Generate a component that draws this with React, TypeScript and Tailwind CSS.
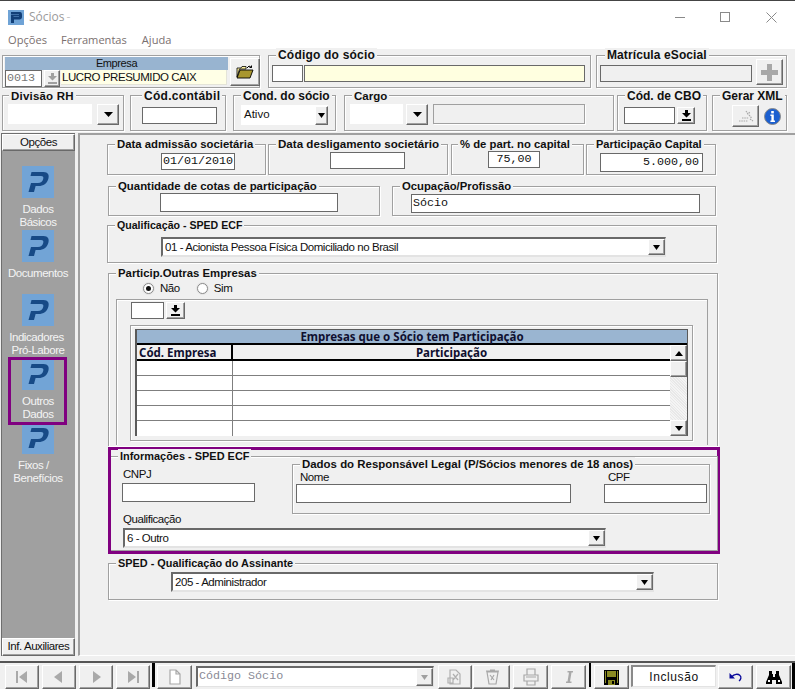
import React from "react";

const raised = "bg-[#f0f0f0] border border-t-white border-l-white border-r-[#696969] border-b-[#696969] shadow-[inset_-1px_-1px_0_#a0a0a0] flex items-center justify-center shrink-0";
const sans = "font-['Liberation_Sans',Arial,sans-serif]";
const mono = "font-['Liberation_Mono','Courier_New',monospace]";
const body = "text-[11.5px] tracking-[-0.44px]";

function Box({ cls, legend, lx, children, ls = "text-[11.4px]", lt = "-top-[8px]" }: { cls: string; legend?: string; lx?: string; children?: React.ReactNode; ls?: string; lt?: string }) {
  return (
    <div className={`relative border border-[#a0a0a0] shadow-[inset_1px_1px_0_#fff,1px_1px_0_#fff] shrink-0 ${cls}`}>
      {legend && (
        <span className={`absolute bg-[#f0f0f0] px-[2px] font-bold leading-[14px] whitespace-nowrap text-[#101010] ${lt} ${lx} ${ls}`}>
          {legend}
        </span>
      )}
      {children}
    </div>
  );
}

function Input({ cls, children }: { cls: string; children?: React.ReactNode }) {
  return <div className={`bg-white border border-[#696969] shrink-0 flex items-center overflow-hidden ${cls}`}>{children}</div>;
}

function Arrow({ w = 9, gray = false }: { w?: number; gray?: boolean }) {
  return (
    <svg width={w} height={5} viewBox="0 0 9 5" preserveAspectRatio="none">
      <path d="M0 0H9L4.5 5Z" fill={gray ? "#a0a0a0" : "#000"} />
    </svg>
  );
}

function DownBar({ gray = false }: { gray?: boolean }) {
  const c = gray ? "#a0a0a0" : "#000";
  return (
    <svg width="9" height="11" viewBox="0 0 9 11">
      <path d="M3 0H6V3H9L4.5 7.5L0 3H3Z" fill={c} />
      <rect x="0" y="9" width="9" height="2" fill={c} />
    </svg>
  );
}

function Combo({ cls, text }: { cls: string; text: string }) {
  return (
    <div className={`bg-white border-t-2 border-l-2 border-t-[#696969] border-l-[#696969] border-r border-b-2 border-r-[#e3e3e3] border-b-[#e3e3e3] flex items-center justify-between shrink-0 ${cls}`}>
      <span className={`pl-[2px] leading-[14px] whitespace-nowrap text-[#111] ${body}`}>{text}</span>
      <div className={`${raised} w-[17px] h-[16px]`}><Arrow w={7} /></div>
    </div>
  );
}

function PLogo({ size = 32 }: { size?: number }) {
  return (
    <svg width={size} height={size} viewBox="0 0 32 32" className="shrink-0">
      <rect width="32" height="32" fill="#72a4d6" />
      <path d="M9.5 6H21.5C26 6 27.5 9 26.3 13C25 17.5 21.5 20 16.5 20H13.6L12 26H6.5L9 17H16C18.8 17 20.5 15.5 21.2 13C21.8 11 21 10 19 10H8.5Z" fill="#174a86" />
    </svg>
  );
}

function SideItem({ label, label2, pad = "", pad2 = "", mark = false }: { label: string; label2?: string; pad?: string; pad2?: string; mark?: boolean }) {
  return (
    <div className="relative h-[64px] flex flex-col items-center pr-[1px]">
      {mark && <div className="absolute -top-[1px] left-[6px] w-[59px] h-[68px] border-[3px] border-[#800080] z-10" />}
      <PLogo />
      <div className={`mt-[5px] leading-[13px] text-[#f4f4f4] text-center whitespace-nowrap ${body}`}>
        <div className={pad}>{label}</div>
        {label2 && <div className={pad2}>{label2}</div>}
      </div>
    </div>
  );
}

function Radio({ on }: { on?: boolean }) {
  return (
    <span className="w-[11px] h-[11px] rounded-full bg-white border border-[#8a8a8a] shadow-[0_0_0_1px_#e4e4e4] flex items-center justify-center shrink-0">
      {on && <span className="w-[5px] h-[5px] rounded-full bg-[#111]" />}
    </span>
  );
}

function Ico({ d, w = 20, h = 20, fill = "#a9a9a9", stroke = "none" }: { d: string; w?: number; h?: number; fill?: string; stroke?: string }) {
  return (
    <svg width={w} height={h} viewBox="0 0 20 20">
      <path d={d} fill={fill} stroke={stroke} strokeWidth={stroke === "none" ? 0 : 1.2} />
    </svg>
  );
}

function Tool({ cls, children }: { cls: string; children?: React.ReactNode }) {
  return <div className={`${raised} h-[24px] ${cls}`}>{children}</div>;
}

export default function App() {
  return (
    <div className={`w-[795px] h-[689px] overflow-hidden flex flex-col bg-[#f0f0f0] text-black ${sans}`}>
      {/* Title */}
      <div className="h-[49px] bg-white border-t border-t-[#444] shrink-0 font-['Open_Sans',sans-serif]">
        <div className="h-[31px] flex items-center pl-[8px] pt-[1px]">
          <svg width="16" height="15" viewBox="0 0 16 15">
            <rect width="16" height="15" fill="#6fa3d6" />
            <path d="M3 2H12C13.5 2 14 3 14 5V7C14 8.5 13 9.5 11.5 9.5H6V13H3V5H11V6.5H5.5V7H11V4.5H3Z" fill="#123f78" />
          </svg>
          <span className="ml-[5px] text-[12px] text-[#9a9a9a]">Sócios</span>
          <span className="ml-[2px] text-[12px] text-[#c8c8c8]">-</span>
          <div className="ml-auto flex items-center">
            <div className="w-[10px] h-px bg-[#8a8a8a] mr-[35px]" />
            <div className="w-[10px] h-[10px] border border-[#8a8a8a] mr-[36px]" />
            <svg width="11" height="11" viewBox="0 0 11 11" className="mr-[18px]">
              <path d="M0.5 0.5L10.5 10.5M10.5 0.5L0.5 10.5" stroke="#8a8a8a" strokeWidth="1" />
            </svg>
          </div>
        </div>
        <div className="flex items-center h-[17px] pl-[8px] text-[11.1px] text-[#7a6f6f]">
          <span>Opções</span>
          <span className="ml-[14px]">Ferramentas</span>
          <span className="ml-[15px]">Ajuda</span>
        </div>
      </div>

      {/* Row 1 */}
      <div className="flex shrink-0 mt-[6px] h-[33px] pl-[2px]">
        <div className="w-[258px] h-[33px] border border-[#a0a0a0] shadow-[inset_1px_1px_0_#fff,1px_1px_0_#fff] flex pl-[2px] pt-[1px] shrink-0">
          <div className="w-[223px] shrink-0">
            <div className="h-[13px] bg-[#98b4d0] text-center text-[11px] tracking-[-0.4px] leading-[13px] text-[#111]">Empresa</div>
            <div className="flex h-[17px]">
              <Input cls={`w-[37px] h-[17px] text-[11.7px] text-[#777] pl-[1px] ${mono}`}>0013</Input>
              <div className={`${raised} w-[16px] h-[17px] ml-[2px]`}><DownBar gray /></div>
              <div className={`ml-[1px] w-[166px] h-[15px] bg-[#ffffe6] border-r border-b border-[#e4e4d8] leading-[14px] pl-[1px] text-[#111] whitespace-nowrap overflow-hidden ${body}`}>LUCRO PRESUMIDO CAIX</div>
            </div>
          </div>
          <div className={`${raised} w-[30px] h-[28px] ml-[2px] mt-[1px]`}>
            <svg width="18" height="14" viewBox="0 0 18 14">
              <path d="M1 3H5L6 1.5H10V4H3.5L1 12Z" fill="#fff3a0" stroke="#000" strokeWidth="0.8" />
              <path d="M1 13L4 5H17L14 13Z" fill="#a8962e" stroke="#000" strokeWidth="0.9" />
              <path d="M11 3L13 1L15.5 2.5M15.5 2.5V0.5M15.5 2.5H13.5" fill="none" stroke="#000" strokeWidth="1" />
            </svg>
          </div>
        </div>
        <Box cls="w-[323px] h-[33px] ml-[8px] flex pl-[3px] pt-[9px]" legend="Código do sócio" lx="left-[7px]" ls="text-[12px] tracking-[0.2px]">
          <Input cls="w-[31px] h-[17px]" />
          <div className="w-[281px] h-[17px] ml-[1px] bg-[#ffffe0] border border-[#696969] shrink-0" />
        </Box>
        <Box cls="w-[191px] h-[33px] ml-[5px] flex pl-[3px] pt-[3px]" legend="Matrícula eSocial" lx="left-[8px]" ls="text-[12px] tracking-[0.1px]">
          <div className="w-[152px] h-[17px] mt-[6px] border border-[#696969] shrink-0" />
          <div className={`${raised} w-[27px] h-[26px] ml-[4px]`}>
            <svg width="17" height="17" viewBox="0 0 17 17"><path d="M6 0H11V6H17V11H11V17H6V11H0V6H6Z" fill="#a8a8a8" /></svg>
          </div>
        </Box>
      </div>

      {/* Row 2 */}
      <div className="flex shrink-0 mt-[7px] h-[36px] pl-[2px]">
        <Box cls="w-[122px] h-[36px] flex pl-[5px] pt-[8px]" legend="Divisão RH" lx="left-[6px]" ls="text-[11.5px] tracking-[0.2px]" lt="-top-[7px]">
          <div className="w-[84px] h-[20px] bg-white" />
          <div className={`${raised} w-[22px] h-[21px] ml-[5px]`}><Arrow /></div>
        </Box>
        <Box cls="w-[96px] h-[36px] ml-[6px] pl-[11px] pt-[11px]" legend="Cód.contábil" lx="left-[11px]" ls="text-[12px] tracking-[0.3px]" lt="-top-[7px]">
          <Input cls="w-[75px] h-[17px]" />
        </Box>
        <Box cls="w-[103px] h-[36px] ml-[7px] pl-[7px] pt-[9px]" legend="Cond. do sócio" lx="left-[7px]" ls="text-[12px]" lt="-top-[7px]">
          <div className="w-[87px] h-[20px] bg-white flex items-center justify-between">
            <span className="pl-[3px] text-[11.5px] text-[#111]">Ativo</span>
            <div className={`${raised} w-[13px] h-[19px]`}><Arrow w={7} /></div>
          </div>
        </Box>
        <Box cls="w-[270px] h-[36px] ml-[8px] flex pl-[5px] pt-[8px]" legend="Cargo" lx="left-[7px]" ls="text-[11.5px]" lt="-top-[7px]">
          <div className="w-[53px] h-[20px] bg-white" />
          <div className={`${raised} w-[22px] h-[21px] ml-[3px]`}><Arrow /></div>
          <div className="w-[152px] h-[20px] ml-[5px] border border-[#a0a0a0] shadow-[1px_1px_0_#fff]" />
        </Box>
        <Box cls="w-[90px] h-[36px] ml-[3px] flex pl-[6px] pt-[11px]" legend="Cód. de CBO" lx="left-[7px]" ls="text-[12px]" lt="-top-[7px]">
          <Input cls="w-[51px] h-[17px]" />
          <div className={`${raised} w-[18px] h-[17px] ml-[2px]`}><DownBar /></div>
        </Box>
        <Box cls="w-[75px] h-[36px] ml-[5px] flex pl-[19px] pt-[9px]" legend="Gerar XML" lx="left-[7px]" ls="text-[12px]" lt="-top-[7px]">
          <div className={`${raised} w-[27px] h-[22px]`}>
            <svg width="16" height="14" viewBox="0 0 16 14">
              <path d="M1 12H10M4 9H11M8 2L10 5L12 3M11 6L14 9.5M12 10L15 12" stroke="#a8a8a8" strokeWidth="1.2" fill="none" strokeDasharray="1.5 0.8" />
            </svg>
          </div>
          <div className="ml-[5px] mt-[3px] w-[17px] h-[17px] rounded-full bg-[#1b5fd0] border border-[#8a8a8a] flex items-center justify-center">
            <svg width="5" height="11" viewBox="0 0 5 11">
              <rect x="1.2" y="0" width="2.6" height="2.4" fill="#fff" />
              <path d="M0.4 3.6H3.8V9.6H5V11H0.4V9.6H1.4V5H0.4Z" fill="#fff" />
            </svg>
          </div>
        </Box>
      </div>

      {/* Body */}
      <div className="flex mt-[2px] h-[523px] shrink-0">
        <div className="w-[74px] ml-[1px] h-[523px] bg-[#a0a0a0] border-l border-l-[#6e6e6e] border-t border-t-[#6e6e6e] flex flex-col items-stretch shrink-0">
          <div className={`${raised} h-[17px] text-[#111] mb-[15px] ${body}`}>Opções</div>
          <SideItem label="Dados" label2="Básicos" />
          <SideItem label="Documentos" />
          <SideItem label="Indicadores" label2="Pró-Labore" pad="pr-[3px]" />
          <SideItem label="Outros" label2="Dados" mark />
          <SideItem label="Fixos /" label2="Benefícios" pad="pr-[9px]" />
          <div className={`${raised} h-[18px] mt-auto text-[#111] ${body}`}>Inf. Auxiliares</div>
        </div>

        <div className="ml-[3px] w-[717px] h-[523px] border-l-2 border-t-2 border-[#a0a0a0] border-b border-b-white shrink-0 text-[#111]">
          <div className="flex ml-[27px] mt-[9px] h-[31px]">
            <Box cls="w-[159px] h-[31px] pl-[53px] pt-[8px]" legend="Data admissão societária" lx="left-[7px]" ls="text-[11.35px]">
              <Input cls={`w-[74px] h-[17px] pl-[1px] text-[11.7px] ${mono}`}>01/01/2010</Input>
            </Box>
            <Box cls="w-[180px] h-[31px] ml-[2px] pl-[61px] pt-[7px]" legend="Data desligamento societário" lx="left-[7px]" ls="text-[11.6px]">
              <Input cls="w-[75px] h-[17px]" />
            </Box>
            <Box cls="w-[133px] h-[31px] ml-[3px] pl-[36px] pt-[6px]" legend="% de part. no capital" lx="left-[6px]" ls="text-[11.3px]">
              <Input cls={`w-[52px] h-[17px] justify-center text-[11.7px] ${mono}`}>75,00</Input>
            </Box>
            <Box cls="w-[130px] h-[31px] ml-[2px] pl-[13px] pt-[8px]" legend="Participação Capital" lx="left-[7px]" ls="text-[11.05px]">
              <Input cls={`w-[103px] h-[19px] justify-end pr-[3px] text-[11.7px] ${mono}`}>5.000,00</Input>
            </Box>
          </div>

          <div className="flex ml-[28px] mt-[11px] h-[30px]">
            <Box cls="w-[272px] h-[30px] pl-[51px] pt-[6px]" legend="Quantidade de cotas de participação" lx="left-[7px]" ls="text-[11.4px]">
              <Input cls="w-[178px] h-[19px]" />
            </Box>
            <Box cls="w-[324px] h-[30px] ml-[12px] pl-[18px] pt-[7px]" legend="Ocupação/Profissão" lx="left-[7px]" ls="text-[11.3px]">
              <Input cls={`w-[289px] h-[19px] pl-[1px] text-[11.7px] ${mono}`}>Sócio</Input>
            </Box>
          </div>

          <div className="ml-[27px] mt-[9px]">
            <Box cls="w-[610px] h-[38px] pl-[53px] pt-[11px]" legend="Qualificação - SPED ECF" lx="left-[7px]" ls="text-[10.6px]">
              <Combo cls="w-[505px] h-[20px]" text="01 - Acionista Pessoa Física Domiciliado no Brasil" />
            </Box>
          </div>

          <div className="ml-[28px] mt-[10px]">
            <Box cls="w-[610px] h-[173px] pt-[7px] border-b-0" legend="Particip.Outras Empresas" lx="left-[7px]" ls="text-[11.35px]">
              <div className={`flex items-center h-[18px] pb-[3px] ml-[34px] ${body}`}>
                <Radio on />
                <span className="ml-[6px]">Não</span>
                <span className="ml-[17px]"><Radio /></span>
                <span className="ml-[6px]">Sim</span>
              </div>
              <div className="ml-[7px] w-[592px] h-[146px] border border-b-0 border-[#a0a0a0] shadow-[inset_1px_1px_0_#fff]">
                <div className="flex pl-[14px] pt-[2px]">
                  <Input cls="w-[33px] h-[17px]" />
                  <div className={`${raised} w-[19px] h-[17px] ml-[2px]`}><DownBar /></div>
                </div>
                <div className="ml-[13px] mt-[6px] w-[563px] h-[116px] border border-[#a0a0a0] shadow-[inset_1px_1px_0_#fff,1px_1px_0_#fff] pl-[4px] pt-[3px]">
                  <div className="w-[553px] h-[107px] border border-[#5a5a5a] border-l-2 flex flex-col font-['Noto_Sans',sans-serif]">
                    <div className="h-[15px] bg-[#9ab5d1] border-b-2 border-b-black text-center font-bold text-[11.5px] leading-[14px] text-[#101030] shrink-0">Empresas que o Sócio tem Participação</div>
                    <div className="flex flex-1 bg-white">
                      <div className="w-[534px]">
                        <div className="flex h-[16px] bg-[#f0f0f0] border-b-2 border-b-black font-bold text-[11.5px] leading-[15px] text-[#101030]">
                          <div className="w-[96px] pl-[2px] border-r-2 border-r-black">Cód. Empresa</div>
                          <div className="flex-1 text-center">Participação</div>
                        </div>
                        {[0, 1, 2, 3, 4].map((i) => (
                          <div key={i} className={`flex h-[15px] ${i < 4 ? "border-b border-b-[#7f7f7f]" : ""}`}>
                            <div className="w-[96px] border-r border-r-[#7f7f7f]" />
                            <div className="flex-1" />
                          </div>
                        ))}
                      </div>
                      <div className="w-[17px] flex flex-col bg-[#ececec] bg-[repeating-linear-gradient(45deg,#f4f4f4_0px,#f4f4f4_1px,#e8e8e8_1px,#e8e8e8_2px)]">
                        <div className={`${raised} h-[16px]`}><svg width="8" height="5" viewBox="0 0 8 5"><path d="M4 0L8 5H0Z" fill="#000" /></svg></div>
                        <div className={`${raised} h-[16px]`} />
                        <div className="flex-1" />
                        <div className={`${raised} h-[16px]`}><Arrow w={8} /></div>
                      </div>
                    </div>
                  </div>
                </div>
              </div>
            </Box>
          </div>

          <div className="relative z-10 ml-[28px] mt-[1px] w-[612px] h-[107px] border-[3px] border-[#800080] bg-[#f0f0f0]">
            <div className="relative mt-[6px] w-[607px] h-[95px] border-t border-r border-b border-[#a0a0a0] shadow-[inset_0_1px_0_#fff]">
              <span className="absolute -top-[8px] left-[7px] bg-[#f0f0f0] px-[2px] font-bold text-[10.95px] leading-[14px] whitespace-nowrap">Informações - SPED ECF</span>
              <div className="flex">
                <div className="ml-[11px] mt-[10px] w-[133px] shrink-0">
                  <div className={`h-[16px] pl-[1px] leading-[14px] ${body}`}>CNPJ</div>
                  <Input cls="w-[133px] h-[19px]" />
                </div>
                <Box cls="w-[418px] h-[50px] ml-[37px] mt-[7px] flex pl-[3px] pt-[6px]" legend="Dados do Responsável Legal (P/Sócios menores de 18 anos)" lx="left-[7px]" ls="text-[11.45px]">
                  <div className="w-[275px] shrink-0">
                    <div className={`h-[13px] pl-[4px] leading-[12px] ${body}`}>Nome</div>
                    <Input cls="w-[275px] h-[19px]" />
                  </div>
                  <div className="w-[103px] ml-[33px] shrink-0">
                    <div className={`h-[13px] pl-[4px] leading-[12px] ${body}`}>CPF</div>
                    <Input cls="w-[103px] h-[19px]" />
                  </div>
                </Box>
              </div>
              <div className={`h-[14px] pl-[12px] leading-[11px] ${body}`}>Qualificação</div>
              <div className="pl-[12px]">
                <Combo cls="w-[483px] h-[20px]" text="6 - Outro" />
              </div>
            </div>
          </div>

          <div className="ml-[28px] mt-[9px]">
            <Box cls="w-[610px] h-[37px] pl-[62px] pt-[8px]" legend="SPED - Qualificação do Assinante" lx="left-[7px]" ls="text-[10.9px]">
              <Combo cls="w-[483px] h-[20px]" text="205 - Administrador" />
            </Box>
          </div>
        </div>
      </div>

      {/* Bottom toolbar */}
      <div className="mt-[5px] flex-1 border-t-2 border-t-[#555] bg-[#f0f0f0] flex pt-[2px] relative">
        <div className="flex w-[152px] pl-[5px] gap-[3px]">
          <Tool cls="w-[34px]"><Ico d="M4 4H6V16H4ZM15 4V16L7 10Z" /></Tool>
          <Tool cls="w-[34px]"><Ico d="M13 4V16L5 10Z" /></Tool>
          <Tool cls="w-[34px]"><Ico d="M7 4V16L15 10Z" /></Tool>
          <Tool cls="w-[34px]"><Ico d="M14 4H16V16H14ZM5 4V16L13 10Z" /></Tool>
        </div>
        <div className="w-[3px] h-[24px] bg-black -mt-[2px] shrink-0" />
        <Tool cls="w-[35px] ml-[2px]"><Ico d="M5 3H11L15 7V17H5ZM11 3V7H15" fill="#fff" stroke="#a8a8a8" /></Tool>
        <div className="ml-[4px] w-[238px] h-[21px] mt-px bg-white border border-t-2 border-l-2 border-[#696969] border-r-[#e3e3e3] border-b-[#e3e3e3] flex items-center justify-between shrink-0">
          <span className={`pl-[1px] text-[11.7px] text-[#8a8a96] ${mono}`}>Código Sócio</span>
          <div className={`${raised} w-[17px] h-[18px]`}><Arrow w={7} gray /></div>
        </div>
        <Tool cls="w-[34px] ml-[4px]"><Ico d="M5 3H11L15 7V17H5ZM8 7L13 13M13 7L8 13M3 11H8V16H3Z" fill="none" stroke="#b0b0b0" /></Tool>
        <Tool cls="w-[37px] ml-[1px]"><Ico d="M5 5L7 17H14L16 5ZM4 4H17M8 3H13M8 8L12 13M12 8L9 13" fill="none" stroke="#a8a8a8" /></Tool>
        <Tool cls="w-[35px] ml-[3px]"><Ico d="M6 2H14V8H6ZM3 8H17V14H3ZM6 14H14V18H6ZM5 10H15" fill="none" stroke="#a8a8a8" /></Tool>
        <Tool cls="w-[35px] ml-[3px]"><Ico d="M8.5 4H14V5.5H12.5L11 14.5H12.5V16H7V14.5H8.5L10 5.5H8.5Z" /></Tool>
        <div className="ml-[3px] w-[2px] h-[24px] bg-black -mt-[2px] shrink-0" />
        <Tool cls="w-[35px] ml-[3px]">
          <svg width="15" height="15" viewBox="0 0 15 15">
            <rect width="15" height="15" fill="#000" />
            <rect x="3" y="1" width="9" height="6" fill="#8a8a22" />
            <rect x="1" y="1" width="1" height="12" fill="#8a8a22" />
            <rect x="13" y="1" width="1" height="12" fill="#8a8a22" />
            <rect x="4" y="10" width="7" height="5" fill="#8a8a22" />
            <rect x="8" y="11" width="2" height="3" fill="#000" />
          </svg>
        </Tool>
        <div className="ml-[2px] w-[85px] h-[22px] bg-white border border-t-2 border-l-2 border-[#8a8a8a] border-r-[#e3e3e3] border-b-[#e3e3e3] flex items-center justify-center text-[12px] tracking-[0.6px] text-[#111] shrink-0">Inclusão</div>
        <Tool cls="w-[35px] ml-[2px]">
          <svg width="13" height="10" viewBox="0 0 13 10">
            <path d="M0.5 1L0.5 6.5L6 6.5Z" fill="#0a0a9a" />
            <path d="M3 4.5C5 2 9 1.5 11 3.5C12.6 5 12 7.5 10 9" fill="none" stroke="#0a0a9a" strokeWidth="1.3" />
          </svg>
        </Tool>
        <Tool cls="w-[35px] ml-[3px]">
          <svg width="16" height="14" viewBox="0 0 16 14">
            <path d="M3 1H6V4H7V7H9V4H10V1H13V5L16 12V14H10V10H6V14H0V12L3 5Z" fill="#000" />
            <rect x="2" y="10" width="2" height="2" fill="#fff" />
            <rect x="12" y="10" width="2" height="2" fill="#fff" />
          </svg>
        </Tool>
        <div className="absolute right-0 top-0 bottom-0 w-[3px] bg-black" />
      </div>
    </div>
  );
}
